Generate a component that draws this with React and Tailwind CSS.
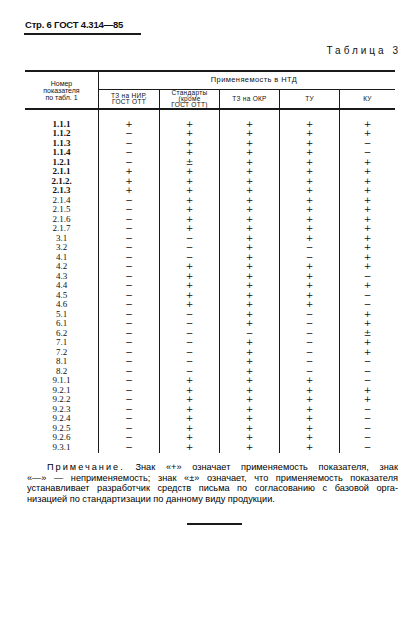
import React from 'react';

const rows = [
  ['1.1.1', '+++++'],
  ['1.1.2', '-++++'],
  ['1.1.3', '-+++-'],
  ['1.1.4', '-+++-'],
  ['1.2.1', '-±+++'],
  ['2.1.1', '+++++'],
  ['2.1.2.', '+++++'],
  ['2.1.3', '+++++'],
  ['2.1.4', '-++++'],
  ['2.1.5', '-++++'],
  ['2.1.6', '-++++'],
  ['2.1.7', '-++++'],
  ['3.1', '--+++'],
  ['3.2', '--+-+'],
  ['4.1', '--+-+'],
  ['4.2', '-++++'],
  ['4.3', '-+++-'],
  ['4.4', '-++++'],
  ['4.5', '-+++-'],
  ['4.6', '-+++-'],
  ['5.1', '--+-+'],
  ['6.1', '--+-+'],
  ['6.2', '----±'],
  ['7.1', '--+-+'],
  ['7.2', '--+-+'],
  ['8.1', '--+--'],
  ['8.2', '--+--'],
  ['9.1.1', '-+++-'],
  ['9.2.1', '-++++'],
  ['9.2.2', '-++++'],
  ['9.2.3', '-+++-'],
  ['9.2.4', '-+++-'],
  ['9.2.5', '-+++-'],
  ['9.2.6', '-+++-'],
  ['9.3.1', '-+++-'],
];

const sub = [
  ['ТЗ на НИР,', 'ГОСТ ОТТ'],
  ['Стандарты', '(кроме', 'ГОСТ ОТТ)'],
  ['ТЗ на ОКР'],
  ['ТУ'],
  ['КУ'],
];

// table marks: plus, minus, plus-minus
function Mark({ c }) {
  if (c === '-') return <span>−</span>;
  if (c === '±') return <span>±</span>;
  return <span>+</span>;
}

export default function App() {
  return (
    <div className="w-[411px] h-[624px] bg-white text-[#111] overflow-hidden font-['Liberation_Sans',sans-serif]">
      {/* page heading */}
      <div className="pt-[19px] pl-[25px] text-[9.5px] leading-[12px] font-bold tracking-[-0.2px]">
        Стр. 6 ГОСТ 4.314—85
      </div>
      <div className="mt-[2px] ml-[24px] w-[117px] h-[1.5px] bg-[#1a1a1a]" />

      <div className="mt-[10px] pr-[10px] text-right text-[10px] leading-[12px] tracking-[3px]">
        Таблица 3
      </div>

      {/* table */}
      <div className="mt-[13px] ml-[25px] w-[370px]">
        <div className="grid grid-cols-[74px_296px] border-t-2 border-b-2 border-[#1a1a1a]">
          <div className="border-r border-[#1a1a1a] flex flex-col items-center justify-center text-[7px] leading-[7px] pt-[2px]">
            <span>Номер</span>
            <span>показателя</span>
            <span>по табл. 1</span>
          </div>
          <div className="flex flex-col">
            <div className="h-[18px] border-b border-[#1a1a1a] flex items-center justify-center text-[7.5px] tracking-[0.4px] pl-[14px]">
              Применяемость в НТД
            </div>
            <div className="h-[18px] grid grid-cols-[60px_60px_60px_60px_56px]">
              {sub.map((lines, i) => (
                <div
                  key={i}
                  className={`flex flex-col items-center justify-center text-[6.5px] leading-[6px] tracking-[0.3px] ${i > 0 ? 'border-l border-[#1a1a1a]' : ''}`}
                >
                  {lines.map((l) => (
                    <span key={l}>{l}</span>
                  ))}
                </div>
              ))}
            </div>
          </div>
        </div>

        <div className="grid grid-cols-[74px_60px_60px_60px_60px_56px]">
          <div className="pt-[10px] pb-[1px] border-r border-[#1a1a1a] font-['Liberation_Serif',serif]">
            {rows.map(([n], i) => (
              <div
                key={n}
                className={`h-[9.5px] flex items-center justify-center text-[9px] leading-[9.5px] ${i < 8 ? 'font-bold' : ''}`}
              >
                {n}
              </div>
            ))}
          </div>
          {[0, 1, 2, 3, 4].map((col) => (
            <div
              key={col}
              className={`pt-[10px] pb-[1px] font-['DejaVu_Sans',sans-serif] text-[9px] ${col > 0 ? 'border-l border-[#1a1a1a]' : ''}`}
            >
              {rows.map(([n, marks]) => (
                <div key={n} className="h-[9.5px] flex items-center justify-center leading-[9.5px]">
                  <Mark c={marks[col]} />
                </div>
              ))}
            </div>
          ))}
        </div>
      </div>

      {/* note */}
      <div className="mt-[9px] ml-[27px] w-[371px] text-[9.2px] leading-[10.5px] text-black">
        <div className="pl-[20px] text-justify [text-align-last:justify]">
          <span className="tracking-[2px]">Примечание.</span> Знак «+» означает применяемость показателя, знак
        </div>
        <div className="text-justify [text-align-last:justify]">
          «—» — неприменяемость; знак «±» означает, что применяемость показателя
        </div>
        <div className="text-justify [text-align-last:justify]">
          устанавливает разработчик средств письма по согласованию с базовой орга-
        </div>
        <div>низацией по стандартизации по данному виду продукции.</div>
      </div>

      <div className="mt-[19px] ml-[187px] w-[55px] h-[1.5px] bg-[#1a1a1a]" />
    </div>
  );
}
